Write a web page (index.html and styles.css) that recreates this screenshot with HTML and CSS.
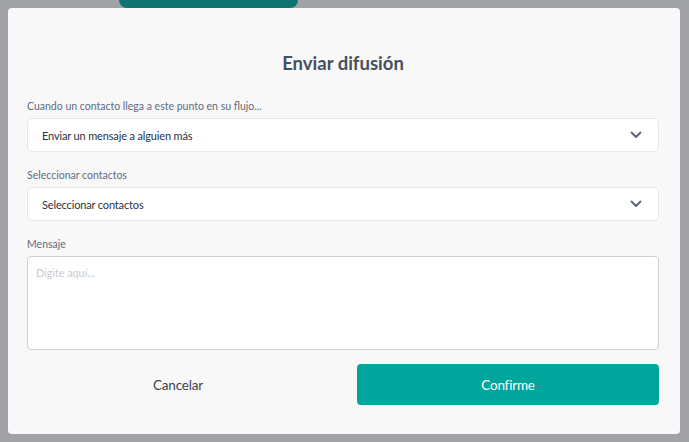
FILE: index.html
```html
<!DOCTYPE html>
<html lang="es">
<head>
<meta charset="utf-8">
<link rel="stylesheet" href="styles.css">
</head>
<body>
<div class="backdrop">
  <div class="bg-button"></div>
  <div class="modal">
    <h2 class="title">Enviar difusión</h2>
    <div class="field">
      <label class="label">Cuando un contacto llega a este punto en su flujo...</label>
      <div class="select">
        <span>Enviar un mensaje a alguien más</span>
        <svg class="chev" width="12" height="8" viewBox="0 0 12 8"><path d="M1.5 1.5 L6 6 L10.5 1.5" fill="none" stroke="#5b6479" stroke-width="2" stroke-linecap="round" stroke-linejoin="round"/></svg>
      </div>
    </div>
    <div class="field">
      <label class="label">Seleccionar contactos</label>
      <div class="select">
        <span>Seleccionar contactos</span>
        <svg class="chev" width="12" height="8" viewBox="0 0 12 8"><path d="M1.5 1.5 L6 6 L10.5 1.5" fill="none" stroke="#5b6479" stroke-width="2" stroke-linecap="round" stroke-linejoin="round"/></svg>
      </div>
    </div>
    <div class="field">
      <label class="label">Mensaje</label>
      <div class="textarea"><span class="placeholder">Digite aquí...</span></div>
    </div>
    <div class="actions">
      <div class="cancel">Cancelar</div>
      <div class="confirm">Confirme</div>
    </div>
  </div>
</div>
</body>
</html>
```
FILE: styles.css
```css
html, body {
  margin: 0;
  padding: 0;
}
body {
  background: #a1a2a5;
  font-family: Lato, "Open Sans", sans-serif;
  width: 689px;
  height: 442px;
  overflow: hidden;
}
.backdrop {
  position: relative;
  height: 442px;
  padding: 8px 9px 0 8px;
  box-sizing: border-box;
}
.bg-button {
  position: absolute;
  left: 119px;
  top: -10px;
  width: 179px;
  height: 18px;
  background: #0f7372;
  border-radius: 8px;
}
.modal {
  position: relative;
  background: #f8f8f8;
  border-radius: 4px;
  height: 426px;
  box-sizing: border-box;
  padding: 43px 21px 0 19px;
}
.title {
  margin: 0;
  text-align: center;
  font-size: 18.5px;
  line-height: 24px;
  font-weight: 700;
  color: #474f5f;
}
.field {
  display: flex;
  flex-direction: column;
}
.field:first-of-type {
  margin-top: 23px;
}
.label {
  font-size: 10.5px;
  line-height: 16px;
  color: #616b80;
  margin-bottom: 4px;
}
.select {
  height: 34px;
  box-sizing: border-box;
  background: #fff;
  border: 1px solid #e4e7ec;
  border-radius: 5px;
  display: flex;
  align-items: center;
  justify-content: space-between;
  padding: 0 16px 0 14px;
  font-size: 11px;
  letter-spacing: -0.15px;
  color: #2a313d;
  margin-bottom: 15px;
}
.chev {
  display: block;
}
.textarea {
  height: 94px;
  box-sizing: border-box;
  background: #fff;
  border: 1px solid #cfd1d6;
  border-radius: 4px;
  padding: 9px 8px;
  font-size: 10.8px;
}
.placeholder {
  color: #c9cad2;
}
.actions {
  display: grid;
  grid-template-columns: 1fr 1fr;
  column-gap: 28px;
  margin-top: 14px;
  align-items: center;
}
.cancel {
  text-align: center;
  font-size: 13.5px;
  letter-spacing: -0.2px;
  color: #3c4350;
}
.confirm {
  height: 41px;
  background: #00a59c;
  border-radius: 4px;
  color: #fff;
  font-size: 13.5px;
  letter-spacing: -0.2px;
  display: flex;
  align-items: center;
  justify-content: center;
}
```
